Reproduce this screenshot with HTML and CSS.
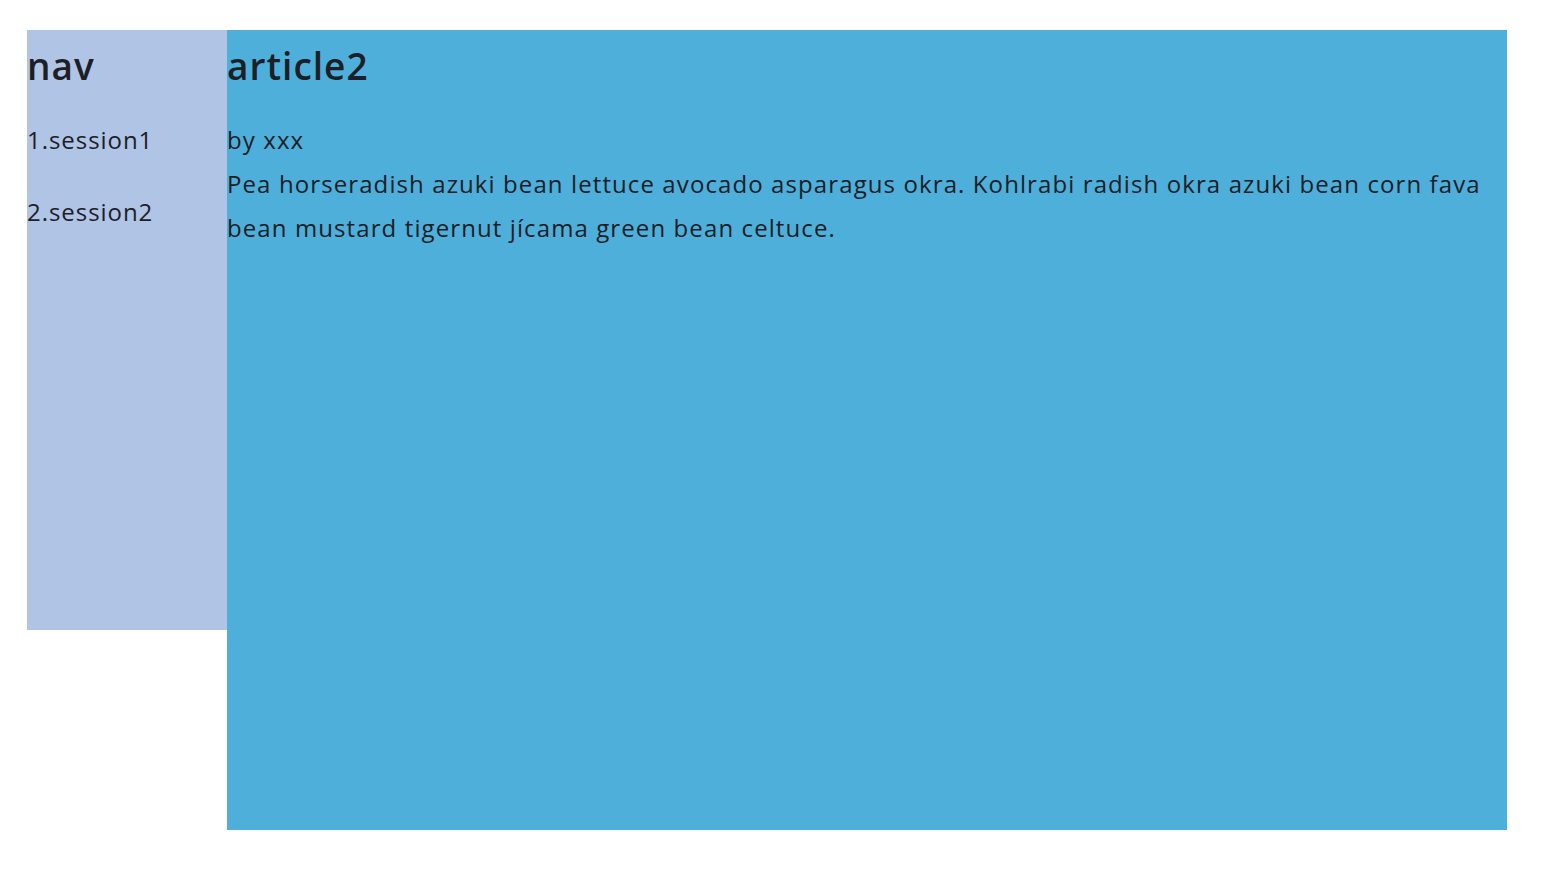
FILE: index.html
```html
<!DOCTYPE html>
<html lang="en">
<head>
<meta charset="utf-8">
<title>Layout</title>
<link rel="stylesheet" href="styles.css">
</head>
<body>
<div class="page">
  <nav class="nav">
    <h2 class="title">nav</h2>
    <p class="nav-item first">1.session1</p>
    <p class="nav-item">2.session2</p>
  </nav>
  <article class="article">
    <h2 class="title">article2</h2>
    <p class="text">by xxx<br>Pea horseradish azuki bean lettuce avocado asparagus okra. Kohlrabi radish okra azuki bean corn fava bean mustard tigernut jícama green bean celtuce.</p>
  </article>
</div>
</body>
</html>
```
FILE: styles.css
```css
html, body {
  margin: 0;
  padding: 0;
  background: #ffffff;
}
body {
  font-family: "Open Sans", "Noto Sans", sans-serif;
  color: #1c2026;
}
.page {
  display: flex;
  align-items: flex-start;
  padding: 30px 0 0 27px;
}
.nav {
  width: 200px;
  height: 600px;
  background: #b0c4e6;
  flex: none;
}
.article {
  width: 1280px;
  height: 800px;
  background: #4eafda;
  flex: none;
}
.title {
  margin: 0;
  font-size: 37px;
  font-weight: 600;
  line-height: 72px;
  letter-spacing: 1px;
}
.nav-item {
  margin: 28px 0 0 0;
  font-size: 24px;
  line-height: 44px;
  letter-spacing: 0.95px;
}
.nav-item.first {
  margin-top: 16px;
}
.text {
  margin: 16px 0 0 0;
  font-size: 24px;
  line-height: 44px;
  letter-spacing: 1.1px;
}
```
